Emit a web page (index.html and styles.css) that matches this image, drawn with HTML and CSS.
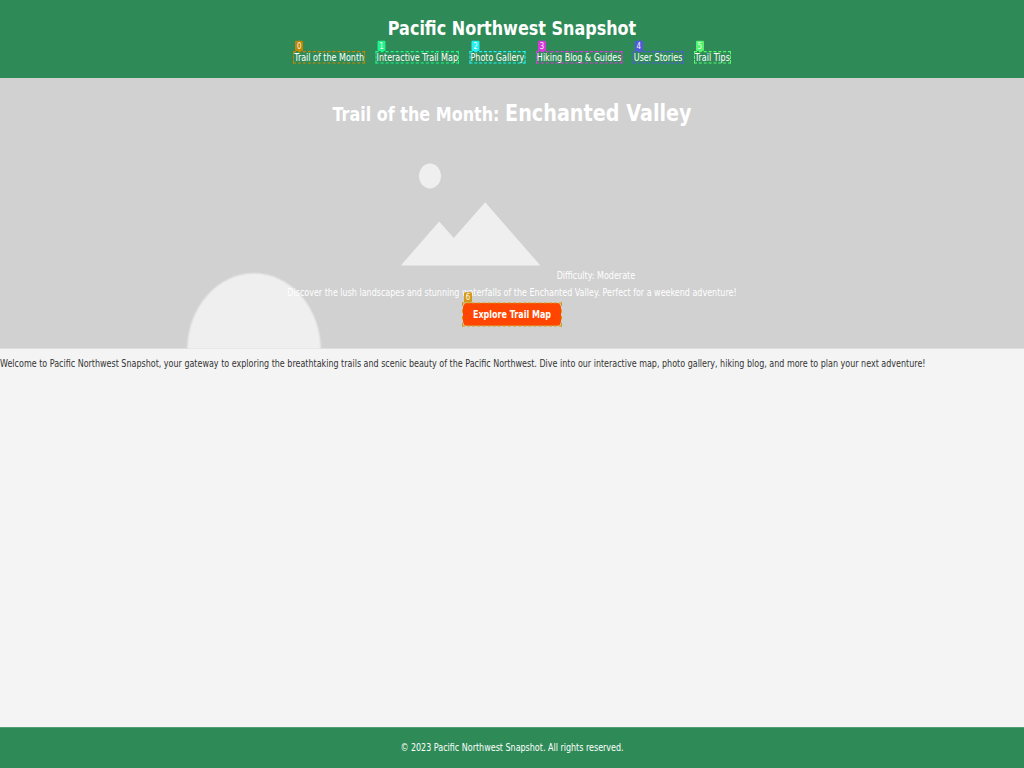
FILE: index.html
```html
<!DOCTYPE html>
<html lang="en">
<head>
<meta charset="utf-8">
<title>Pacific Northwest Snapshot</title>
<link rel="stylesheet" href="styles.css">
</head>
<body>
<div class="page">
  <header class="header">
    <h1 class="site-title">Pacific Northwest Snapshot</h1>
    <nav class="nav">
      <a class="mark amber"><span class="tag">0</span><span class="label">Trail of the Month</span></a>
      <a class="mark mint"><span class="tag">1</span><span class="label">Interactive Trail Map</span></a>
      <a class="mark cyan"><span class="tag">2</span><span class="label">Photo Gallery</span></a>
      <a class="mark magenta"><span class="tag">3</span><span class="label">Hiking Blog &amp; Guides</span></a>
      <a class="mark indigo"><span class="tag">4</span><span class="label">User Stories</span></a>
      <a class="mark green"><span class="tag">5</span><span class="label">Trail Tips</span></a>
    </nav>
  </header>
  <section class="hero">
    <svg class="scene" viewBox="0 77.7 1024 270.8" preserveAspectRatio="none" aria-hidden="true">
      <ellipse cx="254" cy="350" rx="67.8" ry="78" fill="#dadada"/>
      <ellipse cx="254" cy="350" rx="66.8" ry="77" fill="#e6e6e6"/>
      <ellipse cx="254" cy="350" rx="65.8" ry="76" fill="#efefef"/>
      <ellipse cx="430" cy="175.7" rx="11" ry="12.5" fill="#efefef"/>
      <path d="M400.8 265.2 439.2 221.2 453.8 237.8 485.2 202 540.4 265.2Z" fill="#efefef"/>
    </svg>
    <h2 class="hero-title">Trail of the Month: <span class="trail">Enchanted Valley</span></h2>
    <p class="difficulty label">Difficulty: Moderate</p>
    <p class="summary label">Discover the lush landscapes and stunning waterfalls of the Enchanted Valley. Perfect for a weekend adventure!</p>
    <a class="mark button orange"><span class="label">Explore Trail Map</span><span class="tag">6</span></a>
  </section>
  <main class="intro">
    <p class="label">Welcome to Pacific Northwest Snapshot, your gateway to exploring the breathtaking trails and scenic beauty of the Pacific Northwest. Dive into our interactive map, photo gallery, hiking blog, and more to plan your next adventure!</p>
  </main>
  <footer class="footer"><p class="label">© 2023 Pacific Northwest Snapshot. All rights reserved.</p></footer>
</div>
</body>
</html>
```
FILE: styles.css
```css
* { box-sizing: border-box; margin: 0; padding: 0; }
html, body { width: 1024px; height: 768px; overflow: hidden; background: #f4f4f4; }
.page {
  width: 2048px;
  height: 1280px;
  transform: scale(0.5, 0.6);
  transform-origin: 0 0;
  display: flex;
  flex-direction: column;
  background: #f4f4f4;
  color: #333;
  font: 16px/1.6 "DejaVu Sans", sans-serif;
  white-space: nowrap;
}
.label { display: inline-block; transform: scaleY(1.16); }
.header { height: 129.5px; padding-top: 21.9px; background: #2e8b57; color: #fff; text-align: center; }
.site-title { font-size: 32px; line-height: 50px; }
.nav { display: flex; justify-content: center; gap: 25px; padding-top: 14.2px; line-height: 19px; }
.mark { position: relative; }
.mark::after { content: ""; position: absolute; inset: -1px -2px; border: 2px dashed var(--mark); }
.tag {
  position: absolute;
  left: 2px;
  top: -18px;
  width: 16px;
  height: 17px;
  border-radius: 2px;
  background: var(--mark);
  color: #fff;
  font-size: 14px;
  font-weight: 400;
  line-height: 17px;
  text-align: center;
  opacity: .95;
}
.amber { --mark: #c98500; }
.mint { --mark: #20f98c; }
.cyan { --mark: #22f6fc; }
.magenta { --mark: #df35e0; }
.indigo { --mark: #5656e8; }
.green { --mark: #56fa6e; }
.orange { --mark: #d6960c; }
.hero {
  position: relative;
  height: 451.3px;
  padding-top: 33.9px;
  display: flex;
  flex-direction: column;
  align-items: center;
  background: #d1d1d1;
  color: #fff;
}
.scene { position: absolute; inset: 0; width: 100%; height: 100%; }
.hero-title { position: relative; font-size: 32px; line-height: 50px; }
.trail { font-size: 38.4px; }
.difficulty { align-self: flex-end; margin-top: 230.9px; width: 934.6px; line-height: 28px; }
.summary { line-height: 28px; }
.button {
  margin-top: 3px;
  padding: 1px 20px 0;
  border-radius: 8px;
  background: #ff4500;
  font-weight: 700;
  line-height: 36.5px;
}
.intro { flex: 1; padding-top: 12.2px; }
.footer { height: 67.8px; padding-top: 21.1px; background: #2e8b57; color: #fff; text-align: center; }
```
